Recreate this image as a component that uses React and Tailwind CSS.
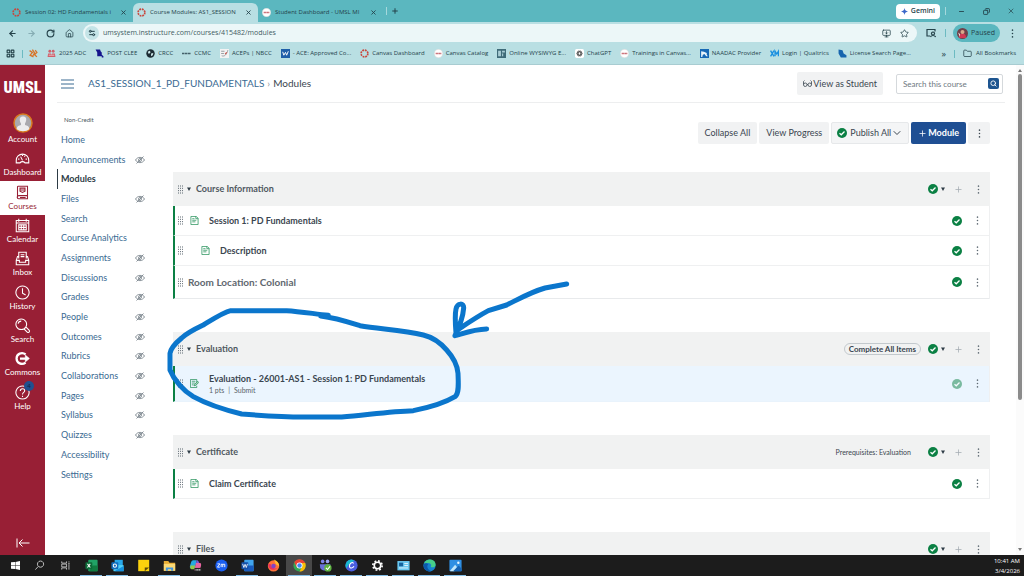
import { useState } from "react";
import {
  ArrowLeft, ArrowRight, RotateCw, House, Star, X, Minus, Plus, Copy, Folder,
  LayoutGrid, Search, ChevronDown, MonitorDown, Settings2,
} from "lucide-react";

const uiFont = "font-['Open_Sans','Noto_Sans',sans-serif]";

const tabs = [
  { title: "Session 02: HD Fundamentals i", icon: "canvas" },
  { title: "Course Modules: AS1_SESSION", icon: "canvas", active: true },
  { title: "Student Dashboard - UMSL MI", icon: "umsl" },
];

const bookmarks = [
  { icon: "orange", title: "" },
  { icon: "pink", title: "2025 ADC" },
  { icon: "state", title: "POST CLEE" },
  { icon: "globe", title: "CRCC" },
  { icon: "dash", title: "CCMC" },
  { icon: "nbcc", title: "ACEPs | NBCC" },
  { icon: "word", title: "- ACE: Approved Co..." },
  { icon: "canvas", title: "Canvas Dashboard" },
  { icon: "umsl", title: "Canvas Catalog" },
  { icon: "editor", title: "Online WYSIWYG E..." },
  { icon: "gpt", title: "ChatGPT" },
  { icon: "umsl", title: "Trainings in Canvas..." },
  { icon: "naadac", title: "NAADAC Provider" },
  { icon: "xm", title: "Login | Qualtrics" },
  { icon: "license", title: "License Search Page..." },
];

const courseNav = [
  { name: "Home" },
  { name: "Announcements", hidden: true },
  { name: "Modules", active: true },
  { name: "Files", hidden: true },
  { name: "Search" },
  { name: "Course Analytics" },
  { name: "Assignments", hidden: true },
  { name: "Discussions", hidden: true },
  { name: "Grades", hidden: true },
  { name: "People", hidden: true },
  { name: "Outcomes", hidden: true },
  { name: "Rubrics", hidden: true },
  { name: "Collaborations", hidden: true },
  { name: "Pages", hidden: true },
  { name: "Syllabus", hidden: true },
  { name: "Quizzes", hidden: true },
  { name: "Accessibility" },
  { name: "Settings" },
];

const modules = [
  {
    name: "Course Information",
    items: [
      { title: "Session 1: PD Fundamentals", type: "page" },
      { title: "Description", type: "page", indent: true },
      { title: "Room Location: Colonial", type: "text" },
    ],
  },
  {
    name: "Evaluation",
    badge: "Complete All Items",
    items: [
      {
        title: "Evaluation - 26001-AS1 - Session 1: PD Fundamentals",
        type: "assignment",
        sub: ["1 pts", "Submit"],
        selected: true,
      },
    ],
  },
  {
    name: "Certificate",
    prereq: "Prerequisites: Evaluation",
    items: [{ title: "Claim Certificate", type: "page" }],
  },
  { name: "Files", items: [] },
];

const Favicon = ({ type }) => {
  const icons = {
    canvas: <circle cx="8" cy="8" r="6" fill="none" stroke="#c8463c" strokeWidth="3" strokeDasharray="3.2 1.5" />,
    umsl: (
      <>
        <circle cx="8" cy="8" r="7.5" fill="#fff" stroke="#d8d8d8" />
        <path d="M3 8h10" stroke="#c0565f" strokeWidth="2.4" strokeDasharray="2 .7" />
      </>
    ),
    orange: (
      <g stroke="#d7752b" strokeWidth="2.4" fill="none">
        <path d="M1 3l5 3-4 5 6 3M6 1l4 6-3 5M11 2l3 4-4 4 4 4" />
      </g>
    ),
    pink: (
      <g fill="#cf5f6a">
        <circle cx="5" cy="4" r="2.5" /><circle cx="11" cy="4" r="2.5" />
        <path d="M1 14l1-6h5l1 2 1-2h5l1 6z" /><path d="M3 11h10" stroke="#fff" />
      </g>
    ),
    state: <path d="M1 1h8l1 3 2 2v4l3 3v2h-3v-2H4V6z" fill="#14148c" />,
    globe: (
      <>
        <circle cx="8" cy="8" r="7.5" fill="#1c2b33" />
        <path d="M3 5l4-2 1 3-3 3zM9 8l4-1-1 4-3 2z" fill="#cfe8ea" />
      </>
    ),
    dash: <path d="M0 8h16" stroke="#44606a" strokeWidth="3" strokeDasharray="4.5 .8" />,
    nbcc: (
      <>
        <rect width="16" height="16" fill="#f3f3f3" />
        <path d="M2 4h6M2 8h5M3 12c5 2 9-2 11-10" stroke="#8a8f95" strokeWidth="1.5" fill="none" />
        <path d="M9 9l3-3" stroke="#d0564c" strokeWidth="2" />
      </>
    ),
    word: (
      <>
        <rect width="16" height="16" fill="#1f5fa8" />
        <path d="M3 5l2 6 3-5 2 5 3-7" stroke="#fff" strokeWidth="1.7" fill="none" />
      </>
    ),
    editor: (
      <>
        <rect width="16" height="16" fill="#3f6b78" />
        <path d="M2 3h5v10H2zM9 3h5v3H9zM9 8h2v5H9z" fill="#a9cdd4" />
      </>
    ),
    gpt: (
      <>
        <rect width="16" height="16" rx="3" fill="#fff" />
        <g stroke="#4a4a4a" strokeWidth="1.3" fill="none">
          <ellipse cx="8" cy="8" rx="5" ry="2.6" />
          <ellipse cx="8" cy="8" rx="5" ry="2.6" transform="rotate(60 8 8)" />
          <ellipse cx="8" cy="8" rx="5" ry="2.6" transform="rotate(120 8 8)" />
        </g>
      </>
    ),
    naadac: (
      <>
        <rect width="16" height="16" fill="#1769b5" />
        <path d="M2 4l5 1 5 2v3l2 3h-3l-3-4-3 1-1 4H2z" fill="#e8f4fb" />
      </>
    ),
    xm: <path d="M1 3l6 10M7 3L1 13M9 13V4l3 5 3-5v9" stroke="#1a8fe0" strokeWidth="2.4" fill="none" />,
    license: <path d="M1 1l7 1 2 6 5 3v4H5L1 8z" fill="#1665ae" />,
  };
  return <svg viewBox="0 0 16 16" className="size-[9px] shrink-0">{icons[type]}</svg>;
};

const BrowserChrome = () => (
  <header className={`${uiFont} shrink-0 bg-[#b9dfe3] text-[#24424a]`}>
    <div className="flex h-[22px] items-end bg-[#5bb7bf] pl-2">
      {tabs.map((tab) => (
        <div
          key={tab.title}
          className={`flex h-[19px] w-[125px] shrink-0 items-center gap-1 rounded-t-md pr-[6px] pl-1 ${tab.active ? "bg-[#b9dfe3]" : ""}`}
        >
          <Favicon type={tab.icon} />
          <span className="text-[6px] whitespace-nowrap">{tab.title}</span>
          <button aria-label="Close tab" className="ml-auto"><X size={7} strokeWidth={3} /></button>
        </div>
      ))}
      <div className="flex h-[22px] flex-1 items-center pl-[3px]">
        <span className="h-2 w-px bg-[#a5d8dc]" />
        <button aria-label="New tab" className="ml-1"><Plus size={8} strokeWidth={3} /></button>
        <button className="ml-auto flex h-[15px] items-center gap-[3px] rounded bg-white px-[5px] text-[7px] font-semibold">
          <svg viewBox="0 0 16 16" className="size-[7px]"><path d="M8 0c1 5 3 7 8 8-5 1-7 3-8 8-1-5-3-7-8-8 5-1 7-3 8-8z" fill="#3b67c9" /></svg>
          Gemini
        </button>
        <span className="ml-[5px] h-2 w-px bg-[#a5d8dc]" />
        <button aria-label="Minimize" className="ml-3"><Minus size={7} strokeWidth={3} /></button>
        <button aria-label="Restore" className="ml-[18px]"><Copy size={7} strokeWidth={3} className="-scale-x-100" /></button>
        <button aria-label="Close" className="mr-[9px] ml-[17px]"><X size={8} strokeWidth={2} /></button>
      </div>
    </div>
    <div className="flex h-[22px] items-center pr-[9px] pl-2">
      <button aria-label="Back"><ArrowLeft size={9} strokeWidth={3} /></button>
      <button aria-label="Forward" className="ml-[10px] text-[#86adb4]"><ArrowRight size={9} strokeWidth={3} /></button>
      <button aria-label="Reload" className="ml-[10px]"><RotateCw size={9} strokeWidth={3} /></button>
      <button aria-label="Home page" className="ml-[10px]"><House size={9} strokeWidth={2} /></button>
      <div className="ml-[9px] flex h-[18px] flex-1 items-center rounded-full bg-[#ecf7f8] pr-2 pl-[2px]">
        <span className="flex size-[14px] items-center justify-center rounded-full bg-[#c4e4e7]"><Settings2 size={8} strokeWidth={3} /></span>
        <input
          aria-label="Address"
          className="ml-1 min-w-0 flex-1 bg-transparent text-[7px] text-[#3f5c63] outline-none"
          defaultValue="umsystem.instructure.com/courses/415482/modules"
        />
        <button aria-label="Install"><MonitorDown size={9} /></button>
        <button aria-label="Bookmark this page" className="ml-[9px]"><Star size={9} /></button>
      </div>
      <button aria-label="Lens" className="ml-[9px]">
        <svg viewBox="0 0 20 20" className="size-[10px]" fill="none" stroke="currentColor" strokeWidth="2.4">
          <path d="M8 16H2V3h16v4M14 8a3 3 0 1 0 .01 0zM9 18c1-4 9-4 10 0" />
        </svg>
      </button>
      <span className="ml-[9px] h-2 w-px bg-[#6cbac1]" />
      <button className="ml-[7px] flex h-[18px] items-center gap-[3px] rounded-full bg-[#5bb7bf] pr-[5px] pl-1 text-[7px]">
        <svg viewBox="0 0 22 22" className="size-[11px]">
          <circle cx="11" cy="11" r="11" fill="#70404a" />
          <path d="M4 20c0-7 3-9 7-9s7 2 7 9z" fill="#d13a56" />
          <circle cx="11" cy="8" r="4" fill="#d9a98c" />
          <path d="M2 9l4 3v6z" fill="#f1e4e0" />
        </svg>
        Paused
      </button>
      <button aria-label="Menu" className="ml-[9px] flex w-[6px] justify-center"><Kebab /></button>
    </div>
    <div className="flex h-[21px] items-center overflow-hidden border-b border-[#a8ccd1] pr-2 pb-px pl-[6px] text-[6px] whitespace-nowrap">
      <LayoutGrid size={9} strokeWidth={3} className="shrink-0" />
      <span className="mr-[6px] ml-[7px] h-2 w-px shrink-0 bg-[#6cbac1]" />
      <div className="flex items-center gap-[9px]">
        {bookmarks.map((b, i) => (
          <a key={i} href="#" aria-label={b.title || "Bookmark"} className="flex items-center gap-[3px]">
            <Favicon type={b.icon} />
            {b.title}
          </a>
        ))}
      </div>
      <button aria-label="More bookmarks" className="ml-auto text-[9px]">»</button>
      <span className="mx-[8px] h-2 w-px bg-[#6cbac1]" />
      <button className="flex items-center gap-1"><Folder size={9} />All Bookmarks</button>
    </div>
  </header>
);

const Kebab = () => (
  <svg viewBox="0 0 4 16" className="h-[9px] w-[3px]" fill="currentColor">
    <circle cx="2" cy="2" r="1.4" /><circle cx="2" cy="8" r="1.4" /><circle cx="2" cy="14" r="1.4" />
  </svg>
);

const globalNav = [
  {
    name: "Dashboard",
    icon: (
      <>
        <path d="M2 19v-4a10 10 0 0 1 20 0v4h-6a5 5 0 0 0-8 0z" />
        <path d="M12 15l-3-6M5 13h2M17 13h2M12 6v2M16 8l-1 1" />
      </>
    ),
  },
  {
    name: "Courses",
    active: true,
    icon: (
      <>
        <path d="M4 20V3a1 1 0 0 1 1-1h15v15H6a2 2 0 0 0 0 5h14v-5M8 20h9" />
        <path d="M8 5h8v5l-4 2-4-2zM8 8h8" />
      </>
    ),
  },
  {
    name: "Calendar",
    icon: <path d="M2 4h20v18H2zM2 8h20M6 1v5M18 1v5M6 11h12v8H6zM6 15h12M10 11v8M14 11v8" />,
  },
  {
    name: "Inbox",
    icon: <path d="M6 12V2h12v10M9 6h6M9 9h6M6 9H4l-2 6v7h20v-7l-2-6h-2M2 15h5v3h10v-3h5" />,
  },
  {
    name: "History",
    icon: <path d="M12 1.5a10.5 10.5 0 1 0 .01 0zM12 5v8l5 3" />,
  },
  {
    name: "Search",
    icon: <path d="M10 1.5a8.5 8.5 0 1 0 .01 0zM16 16l1.5-1.5 5 5a1.5 1.5 0 0 1-3 3l-5-5zM5 9a5 5 0 0 1 5-4" />,
  },
  {
    name: "Commons",
    icon: (
      <g strokeWidth="3.6">
        <path d="M17 5.5C11 1 2.5 4.5 2.5 12S11 23 17 18.5M8 12h11" />
        <path d="M16.5 6.5l6.5 5.5-6.5 5.5z" fill="currentColor" strokeWidth="1" />
      </g>
    ),
  },
  {
    name: "Help",
    count: 4,
    icon: <path d="M12 1.5a10.5 10.5 0 1 0 .01 0zM8.5 9.5c0-5 7-4.5 7-.5 0 3-3.5 2.5-3.5 6M12 17v2" />,
  },
];

const GlobalNav = () => (
  <nav aria-label="Global" className="flex w-[45px] shrink-0 flex-col bg-[#981f35] text-center text-[8px] text-white">
    <a href="#" className="mt-[13px] font-['Liberation_Sans_Narrow','Roboto_Condensed','Liberation_Sans',sans-serif] text-[16px] leading-[19px] font-black">
      UMSL
    </a>
    <a href="#" className="mt-[16px] flex flex-col items-center">
      <svg viewBox="0 0 40 40" className="size-5">
        <circle cx="20" cy="20" r="18" fill="#a9a9ae" stroke="#d97a1f" strokeWidth="3" />
        <path d="M7 32c1-6 5-7 9-8v-3c-5-9-2-14 4-14s9 5 4 14v3c4 1 8 2 9 8-7 6-19 6-26 0z" fill="#ececee" />
      </svg>
      <span className="leading-3">Account</span>
    </a>
    <div className="mt-[3px] flex h-[267px] flex-col">
      {globalNav.map((item) => (
        <a
          key={item.name}
          href="#"
          className={`flex flex-1 flex-col items-center justify-center ${item.active ? "bg-white text-[#981f35]" : ""}`}
        >
          <span className="relative">
            <svg viewBox="0 0 24 24" className="size-[15px]" fill="none" stroke="currentColor" strokeWidth="1.7">{item.icon}</svg>
            {item.count && (
              <span className="absolute -top-1 left-[9px] size-[10px] rounded-full bg-[#20508f] text-[6px] leading-[10px] text-[#0d1f44]">
                {item.count}
              </span>
            )}
          </span>
          <span className="leading-[12px]">{item.name}</span>
        </a>
      ))}
    </div>
    <button aria-label="Minimize global navigation" className="mt-auto mb-[7px] flex justify-center">
      <svg viewBox="0 0 28 20" className="h-[10px] w-[14px]" fill="none" stroke="currentColor" strokeWidth="2">
        <path d="M2 1v18M27 10H6M13 3l-7 7 7 7" />
      </svg>
    </button>
  </nav>
);

const HiddenEye = () => (
  <svg viewBox="0 0 20 16" className="h-2 w-[10px]" fill="none" stroke="#66717b" strokeWidth="1.5">
    <path d="M1 8c4-7 14-7 18 0-4 7-14 7-18 0z" />
    <circle cx="10" cy="8" r="3" />
    <path d="M3 15L17 1" />
  </svg>
);

const CourseNav = () => (
  <nav aria-label="Course" className="w-[128px] shrink-0 pt-[11px] pl-3">
    <p className="pl-[7px] text-[6px] leading-3 text-[#4a5560]">Non-Credit</p>
    <ul className="mt-1 flex h-[354px] flex-col text-[9px]">
      {courseNav.map((item) => (
        <li key={item.name} className="flex flex-1 items-center">
          <a
            href="#"
            className={`flex h-full items-center border-l pl-[3px] ${item.active ? "border-[#2d3b45] font-bold text-[#2d3b45]" : "border-transparent text-[#3a6a92]"}`}
          >
            {item.name}
          </a>
          {item.hidden && <span className="mr-7 ml-auto"><HiddenEye /></span>}
        </li>
      ))}
    </ul>
  </nav>
);

const Check = ({ faded }) => (
  <svg viewBox="0 0 20 20" className={`size-[10px] shrink-0 ${faded ? "opacity-50" : ""}`}>
    <circle cx="10" cy="10" r="10" fill="#0b8044" />
    <path d="M5 10.5l3.5 3L15 7" fill="none" stroke="#fff" strokeWidth="2.6" />
  </svg>
);

const Grip = () => (
  <svg viewBox="0 0 10 18" className="h-[9px] w-[5px] shrink-0" fill="#4b5761">
    {[1, 5, 9].map((x) => [2, 6.6, 11.3, 16].map((y) => <rect key={`${x}-${y}`} x={x - 1} y={y - 1} width="1.8" height="2" />))}
  </svg>
);

const Caret = () => (
  <svg viewBox="0 0 8 8" className="size-1 shrink-0"><path d="M0 1h8L4 8z" fill="#2d3b45" /></svg>
);

const ItemIcon = ({ type }) => (
  <svg viewBox="0 0 20 20" className="size-[9px] shrink-0" fill="none" stroke="#26925b" strokeWidth="1.7">
    {type === "page" ? (
      <path d="M2 1h12l4 4v14H2zM13 1v5h5M5 6h5M5 9.5h9M5 13h7" />
    ) : (
      <>
        <path d="M15 8V1H1v18h14v-4M4 5h8M4 9h7M4 13h4" />
        <path d="M9 15l1-3 7-7 2.5 2.5-7 7z" fill="#a8d4bc" />
      </>
    )}
  </svg>
);

const RowMenu = () => (
  <button aria-label="Manage" className="flex w-[23px] justify-center text-[#5f6a73]"><Kebab /></button>
);

const Module = ({ module }) => {
  const [open, setOpen] = useState(true);
  return (
    <section className="mb-[33px]">
      <div className="flex h-[34px] items-center bg-[#f1f2f2] pl-[5px]">
        <Grip />
        <button onClick={() => setOpen(!open)} className="ml-1 flex items-center gap-[5px] font-bold text-[#4f5860]">
          <Caret />
          {module.name}
        </button>
        <div className="ml-auto flex items-center">
          {module.badge && (
            <span className="mr-[7px] rounded-full border border-[#c3c9cd] px-1 text-[8px] leading-[10px] font-bold">{module.badge}</span>
          )}
          {module.prereq && <span className="mr-[17px] text-[7px]">{module.prereq}</span>}
          <button aria-label="Publish module" className="flex items-center gap-[3px]">
            <Check />
            <Caret />
          </button>
          <button aria-label="Add item" className="ml-1 flex w-[18px] justify-center text-[#a3abb1]"><Plus size={9} strokeWidth={2} /></button>
          <RowMenu />
        </div>
      </div>
      {open && module.items.length > 0 && (
        <ul className="border-r border-[#eff0f1]">
          {module.items.map((item) => (
            <li
              key={item.title}
              className={`flex items-center border-b border-l-2 border-l-[#0b8044] pl-[3px] ${item.selected ? "h-9 border-b-[#e9f3fc] bg-[#ebf5fe]" : item.type === "text" ? "h-[33px] border-b-[#e8eaec]" : "h-[30px] border-b-[#eff0f1]"}`}
            >
              <Grip />
              {item.type === "text" ? (
                <span className="ml-[5px] text-[10px] font-bold text-[#5f686f]">{item.title}</span>
              ) : (
                <div className={`flex items-center gap-[10px] ${item.indent ? "ml-[18px]" : "ml-[7px]"}`}>
                  <ItemIcon type={item.type} />
                  <div>
                    <a href="#" className="block leading-3 font-bold">{item.title}</a>
                    {item.sub && (
                      <p className="flex gap-1 text-[7px] leading-[10px] text-[#5a636b]">
                        <span>{item.sub[0]}</span><span>|</span><span>{item.sub[1]}</span>
                      </p>
                    )}
                  </div>
                </div>
              )}
              <button aria-label="Published" className="ml-auto flex w-[18px] justify-center"><Check faded={item.selected} /></button>
              <RowMenu />
            </li>
          ))}
        </ul>
      )}
    </section>
  );
};

const CoursePage = () => (
  <main className="min-w-0 flex-1 overflow-hidden text-[9px] text-[#3b4650]">
    <div className="mr-[11px] ml-3 flex h-[38px] items-center border-b border-[#edeeef] pr-[2px] pl-[4px]">
      <button aria-label="Course menu" className="text-[#3a6a92]">
        <svg viewBox="0 0 26 20" className="h-[10px] w-[13px]" stroke="currentColor" strokeWidth="2"><path d="M0 2h26M0 10h26M0 18h26" /></svg>
      </button>
      <div className="ml-[14px] flex items-center gap-[3px] text-[10px]">
        <a href="#" className="text-[#3a6a92]">AS1_SESSION_1_PD_FUNDAMENTALS</a>
        <span className="text-[#8a949c]">›</span>
        <span>Modules</span>
      </div>
      <button className="ml-auto flex h-[23px] items-center gap-px rounded-xs bg-[#f1f2f3] px-[6px]">
        <svg viewBox="0 0 18 14" className="h-[7px] w-[9px]" fill="none" stroke="currentColor" strokeWidth="1.6">
          <circle cx="4.5" cy="9.5" r="3.5" /><circle cx="13.5" cy="9.5" r="3.5" />
          <path d="M1 9V3l2-2M17 9V3l-2-2M8 9h2" />
        </svg>
        View as Student
      </button>
      <div className="ml-[13px] flex h-5 w-[107px] items-center rounded-xs border border-[#d5d9dc] pr-[3px] pl-[6px]">
        <input aria-label="Search this course" placeholder="Search this course" className="min-w-0 flex-1 text-[8px] outline-none placeholder:text-[#6d7780]" />
        <button aria-label="Search" className="flex size-[11px] items-center justify-center rounded-xs bg-[#1d5590] text-white"><Search size={7} strokeWidth={3} /></button>
      </div>
    </div>
    <div className="flex">
      <CourseNav />
      <div className="min-w-0 flex-1 pt-[19px] pr-[26px]">
        <div className="flex h-[22px] justify-end gap-[2px]">
          <button className="rounded-xs bg-[#f1f2f3] px-[7px]">Collapse All</button>
          <button className="rounded-xs bg-[#f1f2f3] px-[7px]">View Progress</button>
          <button className="flex items-center gap-[3px] rounded-xs border border-[#e6e8ea] bg-[#f4f5f6] px-[5px]">
            <Check />
            <span className="flex items-center">Publish All <ChevronDown size={12} strokeWidth={2} /></span>
          </button>
          <button className="flex items-center gap-px rounded-xs bg-[#1f4f93] px-[7px] font-bold text-white"><Plus size={9} />Module</button>
          <button aria-label="More options" className="flex w-[22px] items-center justify-center rounded-xs bg-[#f1f2f3]"><Kebab /></button>
        </div>
        <div className="mt-7">
          {modules.map((m) => <Module key={m.name} module={m} />)}
        </div>
      </div>
    </div>
  </main>
);

const Scrollbar = () => (
  <div className="flex w-2 shrink-0 flex-col items-center bg-[#fbfbfb] py-1">
    <svg viewBox="0 0 8 6" className="h-[3px] w-1"><path d="M0 6h8L4 0z" fill="#777" /></svg>
    <span className="mt-[2px] h-[326px] w-1 rounded-full bg-[#8b8b8b]" />
    <svg viewBox="0 0 8 6" className="mt-auto h-[3px] w-1"><path d="M0 0h8L4 6z" fill="#777" /></svg>
  </div>
);

// pen marks drawn over the evaluation row
const InkMarks = () => (
  <svg
    viewBox="0 0 1260 480"
    className="pointer-events-none absolute top-[270px] left-40 h-40 w-[420px]"
    fill="none" stroke="#0b76cc" strokeWidth="15" strokeLinecap="round" strokeLinejoin="round"
  >
    <path d="M505 136C465 132 420 124 380 122H212C190 127 155 150 130 165C105 177 82 188 65 204C48 218 33 232 30 250V300C42 330 70 362 100 380C140 402 195 420 245 432C310 437 370 441 430 441H545C620 435 690 424 760 422C810 412 860 395 885 380C898 370 895 340 894 310C892 285 880 262 860 240C840 217 815 201 790 195C730 181 660 177 600 167C565 156 525 143 482 138" />
    <path d="M1220 42L1155 54C1115 65 1080 85 1040 105L985 122C955 138 925 158 895 178M888 190C886 165 884 135 888 117C892 98 912 98 911 114C909 140 898 170 885 197C905 192 940 178 980 177" />
  </svg>
);

const taskIcons = [
  { name: "Search", art: <path d="M19 3a9 9 0 1 0 .01 0zM12 19L4 28" fill="none" stroke="#ddd" strokeWidth="2.4" /> },
  { name: "Task view", art: <path d="M5 4v5h14V4M5 28v-5h14v5M5 12h14v8H5zM26 4v3M26 12v16M24 10h4" fill="none" stroke="#ddd" strokeWidth="2.2" /> },
  {
    name: "Excel", open: true,
    art: <><rect x="8" y="2" width="23" height="28" rx="2" fill="#21a366" /><path d="M19 16h12v14H10z" fill="#107c41" /><rect x="1" y="8" width="17" height="17" rx="2" fill="#0d6b38" /><path d="M6 12l7 9M13 12l-7 9" stroke="#fff" strokeWidth="2.5" /></>,
  },
  {
    name: "Outlook", open: true,
    art: <><rect x="9" y="2" width="20" height="15" fill="#28a8ea" /><path d="M6 15l25 0v15H6z" fill="#50d0f5" /><path d="M8 30l23-13v13z" fill="#1490df" /><rect x="1" y="8" width="17" height="17" rx="2" fill="#0f6cbd" /><circle cx="9.5" cy="16.5" r="4" fill="none" stroke="#fff" strokeWidth="2.5" /></>,
  },
  { name: "Sticky Notes", art: <><rect x="3" y="2" width="27" height="28" fill="#fbd20d" /><path d="M19 30v-9h11z" fill="#5b4a0a" /></> },
  { name: "File Explorer", open: true, art: <><path d="M2 5h11l3 4h14v20H2z" fill="#e9ae35" /><path d="M2 12h28v17H2z" fill="#fbd976" /><path d="M7 29v-8h18v8h-5v-4h-8v4z" fill="#4397dd" /></> },
  {
    name: "Copilot",
    art: <><path d="M10 3h9l-4 20H6c-5 0-4-4-3-8s3-12 7-12z" fill="#26a9e0" /><path d="M19 3c5 0 5 5 7 8l-9 0z" fill="#7a55d8" /><path d="M17 10h9c5 0 4 5 3 9s-3 9-7 9h-9z" fill="#e764a0" /><path d="M4 16h11l-2 9H6c-4 0-3-5-2-9z" fill="#94c94a" /><rect x="14" y="22" width="17" height="9" fill="#222" /><path d="M16 27h13" stroke="#ddd" strokeWidth="3" strokeDasharray="3 1" /></>,
  },
  { name: "Zoom", art: <><circle cx="16" cy="16" r="15" fill="#1b5ff0" /><path d="M6 12h6l-6 8h6M15 20v-7h4v7M19 13h5v7" fill="none" stroke="#fff" strokeWidth="2.2" /></> },
  { name: "Word", open: true, art: <><rect x="8" y="2" width="23" height="28" rx="2" fill="#41a5ee" /><path d="M8 16h23v14H8z" fill="#185abd" /><rect x="1" y="8" width="17" height="17" rx="2" fill="#1450a8" /><path d="M4 12l3 9 3-8 3 8 3-9" fill="none" stroke="#fff" strokeWidth="2" /></> },
  { name: "Firefox", art: <><circle cx="16" cy="17" r="14" fill="#ff7139" /><path d="M17 1c8 4 13 9 13 17l-8-5z" fill="#ffbd2e" /><path d="M3 12c-1 14 15 20 24 9-8 5-18 1-17-8z" fill="#e8315c" /><circle cx="16" cy="17" r="5.5" fill="#8044c6" /></> },
  {
    name: "Chrome", open: true, current: true,
    art: <><circle cx="16" cy="16" r="15" fill="#34a853" /><path d="M3 8a15 15 0 0 1 26 0l2 3H16L9 20z" fill="#ea4335" /><path d="M30 10a15 15 0 0 1-14 21l7-13-3-8z" fill="#fbbc05" /><circle cx="16" cy="16" r="7.5" fill="#fff" /><circle cx="16" cy="16" r="5.5" fill="#4285f4" /></>,
  },
  { name: "Teams", open: true, art: <><circle cx="9" cy="6" r="4.5" fill="#7b83eb" /><circle cx="21" cy="6" r="4.5" fill="#9aa0f2" /><path d="M2 13h26v9c-3 8-20 9-25 0z" fill="#6970d8" /><circle cx="22" cy="22" r="9" fill="#5fb540" /><path d="M17 22l4 4 6-8" fill="none" stroke="#fff" strokeWidth="2.6" /></> },
  { name: "Canva", open: true, art: <><circle cx="16" cy="16" r="15" fill="#4b5fe0" /><path d="M16 1a15 15 0 0 0-13 22C8 14 12 9 24 4z" fill="#18b9cf" /><path d="M21 11c-2-6-11 0-10 7s9 4 11 0" fill="none" stroke="#fff" strokeWidth="2.8" /></> },
  { name: "Settings", open: true, art: <><circle cx="16" cy="16" r="8" fill="none" stroke="#fff" strokeWidth="4" /><circle cx="16" cy="16" r="11.5" fill="none" stroke="#fff" strokeWidth="4" strokeDasharray="4.5 4.53" /></> },
  { name: "News", open: true, art: <><rect x="1" y="5" width="30" height="23" fill="#69c7ef" /><rect x="5" y="9" width="10" height="9" fill="#17639c" /><path d="M18 11h9M18 16h9M5 22h22" stroke="#e9f7fd" strokeWidth="2.2" /></> },
  { name: "Edge", open: true, art: <><circle cx="16" cy="16" r="15" fill="#1683cf" /><path d="M2 12C7-4 31-1 31 14c0 7-9 8-12 5 3-4 0-9-6-9-5 0-9 1-11 2z" fill="#46cf8a" /><path d="M13 13c-5 4-2 15 8 17-10 3-22-6-19-18 3-3 9-2 11 1z" fill="#0c58a8" /></> },
  { name: "Photos", open: true, art: <><rect x="1" y="2" width="30" height="28" rx="2" fill="#2f8fe3" /><path d="M3 28l12-14 5 6-7 10H3z" fill="#bfe6fb" /><path d="M10 30l14-14 7 8v6z" fill="#1563b4" /><circle cx="23" cy="9" r="3" fill="#e9f7ff" /></> },
];

const Taskbar = () => (
  <footer className={`${uiFont} flex h-[21px] shrink-0 items-stretch bg-[#1c1c1c] pl-1 text-white`}>
    <button aria-label="Start" className="flex w-[22px] items-center justify-center">
      <svg viewBox="0 0 20 20" className="size-[9px]" fill="#fff"><path d="M0 3l9-1v7H0zM10 2l10-2v9H10zM0 10h9v8l-9-1zM10 10h10v10l-10-2z" /></svg>
    </button>
    {taskIcons.map((t) => (
      <button key={t.name} aria-label={t.name} className={`flex w-[26px] flex-col items-center justify-between px-[2px] pt-1 ${t.current ? "bg-[#484848]" : ""}`}>
        <svg viewBox="0 0 32 32" className={t.name === "Search" || t.name === "Task view" ? "mt-px size-[11px]" : "size-[13px]"}>{t.art}</svg>
        {t.open && <span className="h-px w-full bg-[#84bfe8]" />}
      </button>
    ))}
    <div className="ml-auto flex flex-col justify-center pr-1 text-right text-[6px] leading-[10px]">
      <span>10:41 AM</span>
      <span>3/4/2026</span>
    </div>
  </footer>
);

const App = () => {
  return (
    <div className="relative flex h-screen flex-col overflow-hidden bg-white font-['Lato',sans-serif]">
      <BrowserChrome />
      <div className="flex min-h-0 flex-1">
        <GlobalNav />
        <CoursePage />
        <Scrollbar />
      </div>
      <Taskbar />
      <InkMarks />
    </div>
  );
};

export default App;
